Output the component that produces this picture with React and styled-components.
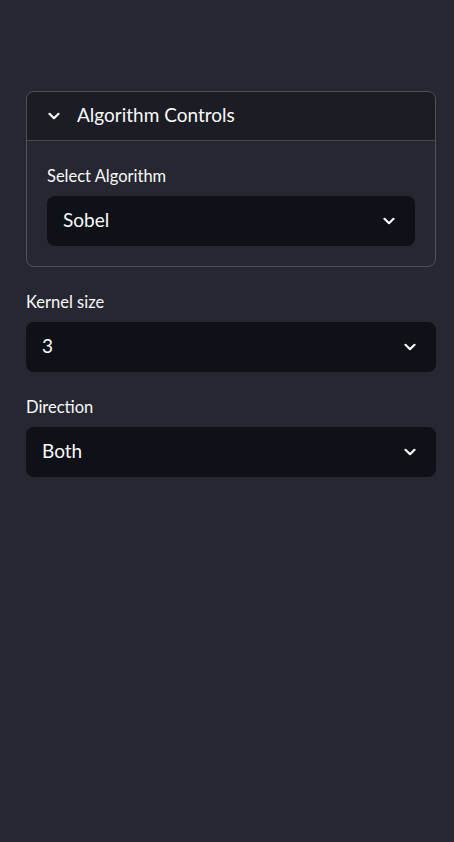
import styled, { createGlobalStyle } from "styled-components";

const Global = createGlobalStyle`
    html, body {
        margin: 0;
        padding: 0;
        background: #262730;
    }
    body {
        font-family: "Lato", "Noto Sans", sans-serif;
        color: #fafafa;
    }
`

function Chevron({ size = 12 }) {
    return (
        <svg width={size} height={size} viewBox="0 0 12 12" fill="none">
            <polyline points="1.5,3.8 6,8.2 10.5,3.8" stroke="#fafafa" strokeWidth="2.2" strokeLinecap="round" strokeLinejoin="round" />
        </svg>
    )
}

function Select({ label, value }) {
    return (
        <Field>
            <Label>{label}</Label>
            <SelectBox>
                <Text>{value}</Text>
                <Chevron />
            </SelectBox>
        </Field>
    )
}

export default function App() {
    return (
        <Sidebar>
            <Global />
            <Expander>
                <ExpanderHeader>
                    <Chevron />
                    <Text>Algorithm Controls</Text>
                </ExpanderHeader>
                <ExpanderBody>
                    <Select label="Select Algorithm" value="Sobel" />
                </ExpanderBody>
            </Expander>
            <Select label="Kernel size" value="3" />
            <Select label="Direction" value="Both" />
        </Sidebar>
    )
}

const Sidebar = styled.div`
    min-height: 842px;
    box-sizing: border-box;
    padding: 91px 18px 0 26px;
    display: flex;
    flex-direction: column;
    gap: 24px;
`

const Expander = styled.div`
    border: 1px solid rgba(250, 250, 250, 0.2);
    border-radius: 8px;
    overflow: hidden;
`

const ExpanderHeader = styled.div`
    height: 48px;
    display: flex;
    align-items: center;
    gap: 17px;
    padding: 0 21px;
    background: #1b1c24;
    border-bottom: 1px solid rgba(250, 250, 250, 0.2);
    font-size: 19px;
`

const Text = styled.span`
    margin-top: -4px;
`

const ExpanderBody = styled.div`
    padding: 24px 20px 20px;
`

const Field = styled.div`
    display: flex;
    flex-direction: column;
    gap: 8px;
`

const Label = styled.div`
    font-size: 16.5px;
    line-height: 23px;
`

const SelectBox = styled.div`
    height: 50px;
    box-sizing: border-box;
    display: flex;
    align-items: center;
    justify-content: space-between;
    padding: 0 20px 0 16px;
    background: #0f1118;
    border-radius: 8px;
    font-size: 19px;
`
